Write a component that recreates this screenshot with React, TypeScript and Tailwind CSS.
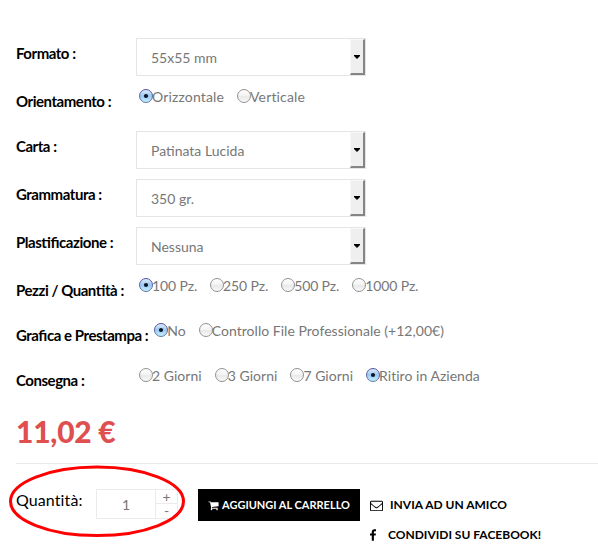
import React from 'react';

interface RowProps {
  label: string;
  tall?: boolean;
  children: React.ReactNode;
}

interface RadioGroupProps {
  options: string[];
  selected: string;
  className?: string;
}

const Row: React.FC<RowProps> = ({ label, tall, children }) => (
  <div className={tall ? 'flex items-start h-12' : 'flex items-start h-[45px]'}>
    <div className="min-w-[120px] shrink-0 pt-[5px] text-[15px] leading-5 font-bold tracking-[-0.46px] [font-feature-settings:'liga'] text-black whitespace-nowrap">
      {label} :
    </div>
    {children}
  </div>
);

const SelectBox: React.FC<{ value: string }> = ({ value }) => (
  <div className="flex w-[230px] h-[38px] border border-[#e5e5e5] bg-white">
    <span className="flex-1 pl-[14px] pt-[9px] text-sm leading-5 text-[#777]">{value}</span>
    <span className="flex w-[15px] items-center justify-center bg-[#efefef] border-t border-l border-t-[#f8f8f8] border-l-[#f8f8f8] border-r-2 border-b-2 border-r-[#858585] border-b-[#858585]">
      <svg width="6" height="4" viewBox="0 0 6 4" className="shrink-0">
        <path d="M0 0h6v1L3 4 0 1z" fill="#000" />
      </svg>
    </span>
  </div>
);

const RadioDot: React.FC<{ checked: boolean }> = ({ checked }) => (
  <svg width="14" height="14" viewBox="0 0 14 14" className="shrink-0 mt-[3px]">
    <defs>
      <linearGradient id="radioOn" x1="0" y1="0" x2="0" y2="1">
        <stop offset="0" stopColor="#e4effb" />
        <stop offset="0.5" stopColor="#9cc7f3" />
        <stop offset="1" stopColor="#c9f1ff" />
      </linearGradient>
      <linearGradient id="radioOnEdge" x1="0" y1="0" x2="0" y2="1">
        <stop offset="0" stopColor="#5550a5" />
        <stop offset="1" stopColor="#5c7ca8" />
      </linearGradient>
      <linearGradient id="radioOff" x1="0" y1="0" x2="0" y2="1">
        <stop offset="0" stopColor="#fff" />
        <stop offset="0.45" stopColor="#f4f4f4" />
        <stop offset="0.55" stopColor="#e9e9e9" />
        <stop offset="1" stopColor="#fbfbfb" />
      </linearGradient>
    </defs>
    <circle
      cx="7"
      cy="7"
      r="6.5"
      fill={checked ? 'url(#radioOn)' : 'url(#radioOff)'}
      stroke={checked ? 'url(#radioOnEdge)' : '#929292'}
      strokeWidth="1"
    />
    {checked && <circle cx="7" cy="7" r="2.1" fill="#0b1527" />}
  </svg>
);

const RadioGroup: React.FC<RadioGroupProps> = ({ options, selected, className = 'ml-[3px]' }) => (
  <div className={`flex gap-[13px] text-sm text-[#777] ${className}`}>
    {options.map((option) => (
      <label key={option} className="flex items-start whitespace-nowrap">
        <RadioDot checked={option === selected} />
        <span className="-ml-px leading-[22px]">{option}</span>
      </label>
    ))}
  </div>
);

const CartIcon: React.FC = () => (
  <svg width="11" height="11" viewBox="0 0 1792 1792" fill="currentColor" className="mr-[3px] shrink-0">
    <path d="M704 1536q0 52-38 90t-90 38-90-38-38-90 38-90 90-38 90 38 38 90zm896 0q0 52-38 90t-90 38-90-38-38-90 38-90 90-38 90 38 38 90zm128-1088v512q0 24-16.500 42.500t-40.500 21.500l-1044 122q13 60 13 70 0 16-24 64h920q26 0 45 19t19 45-19 45-45 19h-1024q-26 0-45-19t-19-45q0-11 8-31.500t16-36 21.500-40 15.500-29.500l-177-823h-204q-26 0-45-19t-19-45 19-45 45-19h256q16 0 28.500 6.500t19.500 15.500 13 24.500 8 26 5.500 29.500 4.500 26h1201q26 0 45 19t19 45z" />
  </svg>
);

const EnvelopeIcon: React.FC = () => (
  <svg width="13" height="13" viewBox="0 0 1792 1792" fill="currentColor" className="mr-[7px] shrink-0">
    <path d="M1664 1504v-768q-32 36-69 66-268 206-426 338-51 43-83 67t-86.500 48.500-102.500 24.500h-2q-48 0-102.500-24.500t-86.500-48.500-83-67q-158-132-426-338-37-30-69-66v768q0 13 9.500 22.500t22.500 9.500h1472q13 0 22.500-9.500t9.500-22.500zm0-1051v-24.500l-.5-13-3-12.500-5.500-9-9-7.500-14-2.500h-1472q-13 0-22.500 9.500t-9.500 22.500q0 168 147 284 193 152 401 317 6 5 35 29.500t46 37.500 44.500 31.500 50.500 27.500 43 9h2q20 0 43-9t50.500-27.500 44.500-31.500 46-37.500 35-29.500q208-165 401-317 54-43 100.500-115.500t46.500-131.500zm128-37v1088q0 66-47 113t-113 47h-1472q-66 0-113-47t-47-113v-1088q0-66 47-113t113-47h1472q66 0 113 47t47 113z" />
  </svg>
);

const FacebookIcon: React.FC = () => (
  <svg width="6" height="12" viewBox="479 0 864 1664" fill="currentColor" className="mr-3 shrink-0">
    <path d="M1343 12v264h-157q-86 0-116 36t-30 108v189h293l-39 296h-254v759h-306v-759h-255v-296h255v-218q0-186 104-288.500t277-102.500q147 0 228 12z" />
  </svg>
);

const App: React.FC = () => {
  return (
    <div className="relative w-[598px] h-[547px] overflow-hidden bg-white pl-4 pt-[38px] font-['Lato',sans-serif]">
      <Row label="Formato" tall>
        <SelectBox value="55x55 mm" />
      </Row>
      <Row label="Orientamento">
        <RadioGroup
          options={['Orizzontale', 'Verticale']}
          selected="Orizzontale"
          className="ml-[3px] tracking-[0.15px]"
        />
      </Row>
      <Row label="Carta" tall>
        <SelectBox value="Patinata Lucida" />
      </Row>
      <Row label="Grammatura" tall>
        <SelectBox value="350 gr." />
      </Row>
      <Row label="Plastificazione" tall>
        <SelectBox value="Nessuna" />
      </Row>
      <Row label="Pezzi / Quantità">
        <RadioGroup
          options={['100 Pz.', '250 Pz.', '500 Pz.', '1000 Pz.']}
          selected="100 Pz."
          className="ml-[3px] tracking-[-0.13px]"
        />
      </Row>
      <Row label="Grafica e Prestampa">
        <RadioGroup
          options={['No', 'Controllo File Professionale (+12,00€)']}
          selected="No"
          className="ml-[6px] tracking-[0.03px]"
        />
      </Row>
      <Row label="Consegna">
        <RadioGroup
          options={['2 Giorni', '3 Giorni', '7 Giorni', 'Ritiro in Azienda']}
          selected="Ritiro in Azienda"
          className="ml-[3px] tracking-[0.03px]"
        />
      </Row>

      <div className="h-[53px] pt-[3px] text-[30px] leading-9 font-black tracking-[-0.25px] text-[#e04f4f]">
        11,02 €
      </div>

      <div className="flex items-start border-t border-[#e9e9e9] pt-[25px]">
        <div className="w-20 pt-[1px] text-base leading-5 tracking-[0.1px] text-black">Quantità:</div>
        <div className="flex w-[82px] h-[30px] border border-[#ebebeb] text-[#777]">
          <div className="flex-1 pt-[5px] text-center text-sm leading-5">1</div>
          <div className="w-[22px] border-l border-[#ebebeb] text-center text-sm">
            <div className="h-[14px] border-b border-[#ebebeb] leading-[14px]">+</div>
            <div className="h-[14px] leading-[14px]">-</div>
          </div>
        </div>
        <button className="flex items-center ml-5 w-[162px] h-8 pl-[10px] bg-black text-white text-[11px] font-bold whitespace-nowrap">
          <CartIcon />
          AGGIUNGI AL CARRELLO
        </button>
        <div className="ml-[10px] text-xs font-bold text-black whitespace-nowrap">
          <div className="flex items-center h-8">
            <EnvelopeIcon />
            INVIA AD UN AMICO
          </div>
          <div className="flex items-center h-7">
            <FacebookIcon />
            CONDIVIDI SU FACEBOOK!
          </div>
        </div>
      </div>

      {/* highlight around the quantity field */}
      <svg className="absolute left-2 top-[464px]" width="180" height="76" viewBox="0 0 180 76">
        <ellipse cx="89" cy="37.3" rx="86.5" ry="34.3" fill="none" stroke="#f00" strokeWidth="3" />
      </svg>
    </div>
  );
};

export default App;
